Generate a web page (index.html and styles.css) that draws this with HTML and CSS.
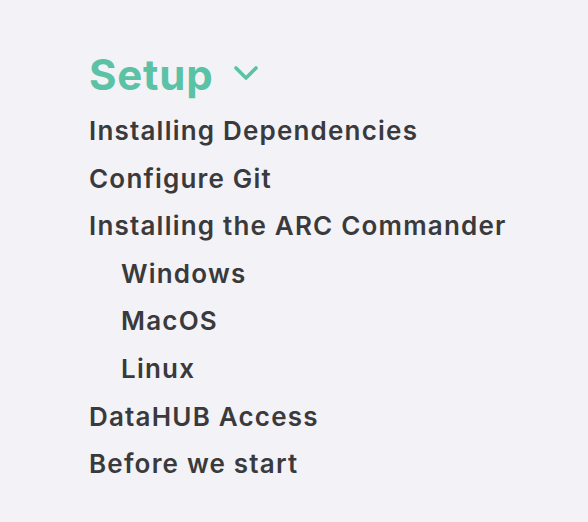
FILE: index.html
```html
<!DOCTYPE html>
<html>
<head>
<meta charset="utf-8">
<link rel="stylesheet" href="styles.css">
</head>
<body>
<nav class="menu">
  <div class="head">
    <span class="title">Setup</span>
    <svg class="chev" width="24" height="14" viewBox="0 0 24 14"><path d="M2 2 L12 12 L22 2" fill="none" stroke="#5bc2a5" stroke-width="3.6" stroke-linecap="round" stroke-linejoin="round"/></svg>
  </div>
  <ul class="items">
    <li>Installing Dependencies</li>
    <li>Configure Git</li>
    <li>Installing the ARC Commander</li>
    <li class="sub">Windows</li>
    <li class="sub">MacOS</li>
    <li class="sub">Linux</li>
    <li>DataHUB Access</li>
    <li>Before we start</li>
  </ul>
</nav>
</body>
</html>
```
FILE: styles.css
```css
html, body { margin: 0; padding: 0; }
body {
  background: #f2f2f7;
  font-family: Inter, "Noto Sans", sans-serif;
  width: 588px;
  height: 522px;
}
.menu { padding: 48px 0 0 89px; }
.head { display: flex; align-items: center; gap: 20px; height: 52px; }
.title { color: #5bc2a5; font-size: 42px; font-weight: 700; letter-spacing: 0.8px; }
.chev { margin-top: -2px; }
.items { list-style: none; margin: 7px 0 0; padding: 0; }
.items li {
  color: #3a3a3c;
  font-size: 26px;
  font-weight: 600;
  letter-spacing: 1.2px;
  height: 47.6px;
  line-height: 47.6px;
}
.items li.sub { padding-left: 32px; }
```
